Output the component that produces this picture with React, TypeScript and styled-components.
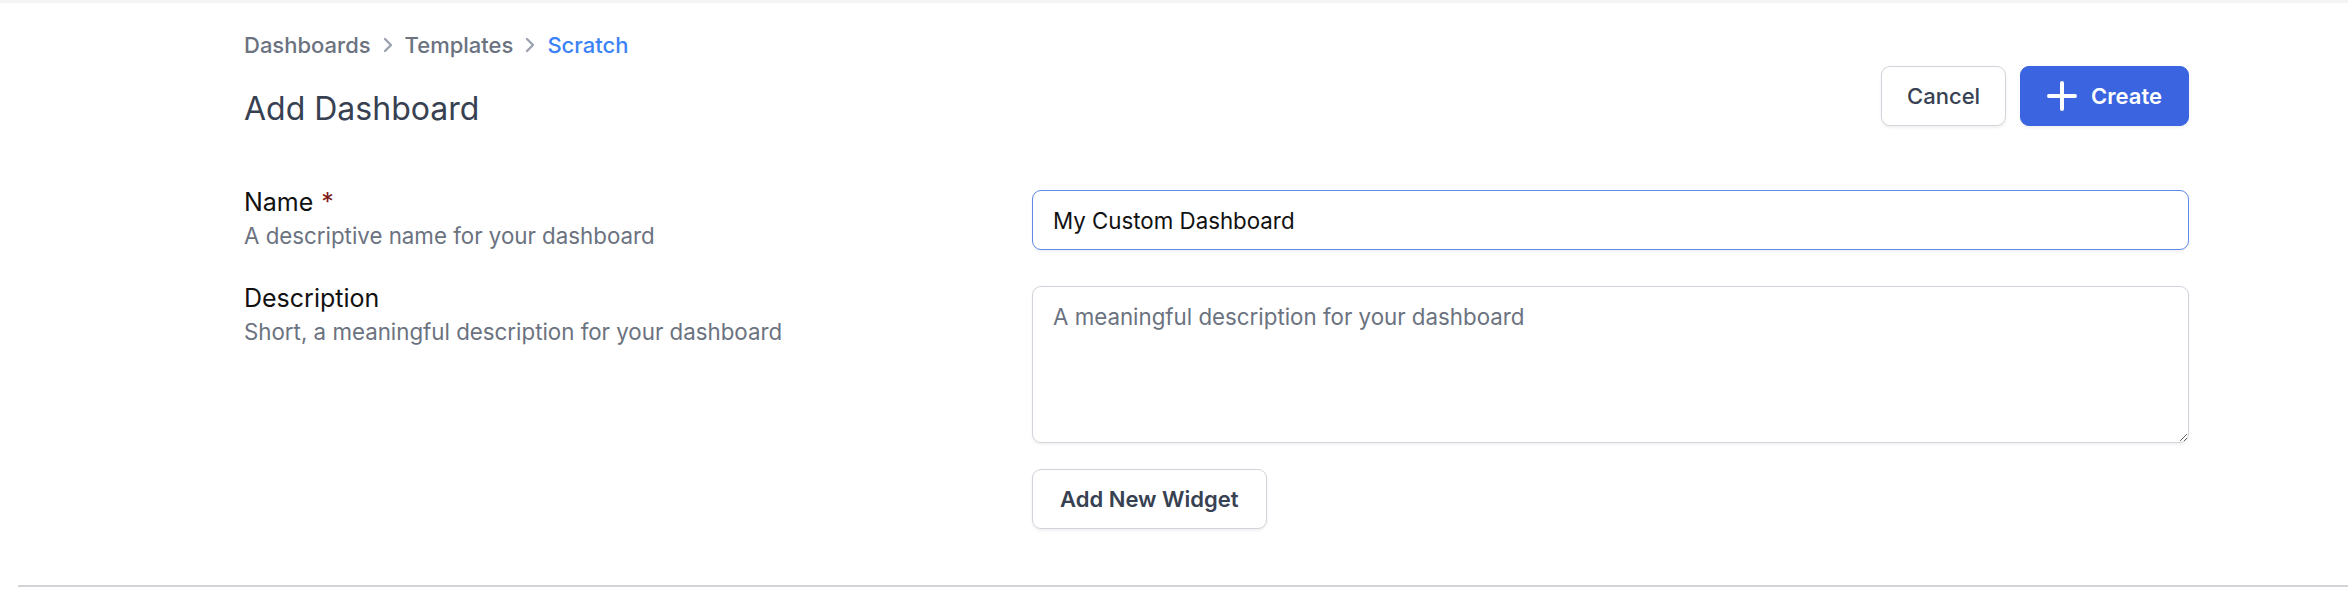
import React from "react";
import styled, { createGlobalStyle } from "styled-components";

const GlobalStyle = createGlobalStyle`
  html, body { margin: 0; padding: 0; background: #ffffff; }
  body { font-family: Inter, "Noto Sans", "Liberation Sans", sans-serif; color: #111827; }
  * { box-sizing: border-box; }
`;

const Page = styled.div`
  width: 2348px;
  min-height: 596px;
  border-top: 3px solid #f3f4f6;
  background: #fff;
`;

const Content = styled.div`
  width: 1945px;
  margin-left: 244px;
  padding-top: 27px;
`;

const Header = styled.header`
  display: flex;
  justify-content: space-between;
  align-items: flex-start;
`;

const TitleBlock = styled.div`
  display: flex;
  flex-direction: column;
  gap: 26px;
`;

const Breadcrumb = styled.nav`
  display: flex;
  align-items: center;
  font-size: 22px;
  line-height: 30px;
  font-weight: 500;
`;

const Crumb = styled.span<{ $active?: boolean }>`
  color: ${(p) => (p.$active ? "#3b82f6" : "#6b7280")};
`;

const Sep = styled.svg`
  width: 10px;
  height: 16px;
  margin: 0 12px;
  color: #9ca3af;
`;

const Title = styled.h1`
  margin: 0;
  font-size: 32px;
  line-height: 45px;
  font-weight: 400;
  color: #374151;
`;

const Actions = styled.div`
  display: flex;
  gap: 14px;
  padding-top: 36px;
`;

const Button = styled.button<{ $primary?: boolean }>`
  display: inline-flex;
  align-items: center;
  gap: 14px;
  height: 60px;
  padding: 0 ${(p) => (p.$primary ? "26px" : "25px")};
  border-radius: 9px;
  font-family: inherit;
  font-size: 22px;
  font-weight: ${(p) => (p.$primary ? 600 : 500)};
  border: 1px solid ${(p) => (p.$primary ? "#3a64e0" : "#d1d5db")};
  background: ${(p) => (p.$primary ? "#3a64e0" : "#ffffff")};
  color: ${(p) => (p.$primary ? "#ffffff" : "#374151")};
  box-shadow: 0 1.5px 3px rgba(0, 0, 0, 0.06);
  cursor: pointer;
`;

const WidgetButton = styled(Button)`
  padding: 0 27px;
  font-weight: 600;
`;

const Form = styled.div`
  display: flex;
  flex-direction: column;
  gap: 36px;
  margin-top: 59px;
`;

const FieldRow = styled.div<{ $tight?: boolean }>`
  display: grid;
  grid-template-columns: 764px 1157px;
  column-gap: 24px;
  margin-top: ${(p) => (p.$tight ? "-10px" : "0")};
`;

const FieldInfo = styled.div`
  display: flex;
  flex-direction: column;
  gap: 8px;
`;

const Label = styled.label`
  font-size: 25px;
  line-height: 24px;
  font-weight: 400;
  color: #111111;
`;

const Req = styled.span`
  color: #7f1d1d;
  margin-left: 8px;
`;

const Hint = styled.div`
  font-size: 22.3px;
  line-height: 28px;
  color: #6b7280;
`;

const TextInput = styled.input`
  width: 100%;
  height: 60px;
  padding: 0 20px;
  border: 1px solid #5f8ae8;
  border-radius: 9px;
  font-family: inherit;
  font-size: 22.3px;
  color: #111111;
  box-shadow: 0 1.5px 3px rgba(0, 0, 0, 0.05);
  outline: none;
`;

const TextArea = styled.textarea`
  width: 100%;
  height: 157px;
  padding: 15px 20px;
  border: 1px solid #d1d5db;
  border-radius: 9px;
  font-family: inherit;
  font-size: 22.3px;
  line-height: 30px;
  color: #111111;
  box-shadow: 0 1.5px 3px rgba(0, 0, 0, 0.05);
  outline: none;
  resize: vertical;
  &::placeholder { color: #6b7280; }
`;

const WidgetCell = styled.div`
  grid-column: 2;
`;

const Divider = styled.hr`
  margin: 56px 0 0 18px;
  border: 0;
  border-top: 2px solid #d4d4d8;
`;

function Chevron() {
  return (
    <Sep viewBox="0 0 10 16" fill="none" stroke="currentColor" strokeWidth={2.4} strokeLinecap="round" strokeLinejoin="round">
      <polyline points="2,2 8,8 2,14" />
    </Sep>
  );
}

function PlusIcon() {
  return (
    <svg width="30" height="30" viewBox="0 0 30 30" fill="none" stroke="currentColor" strokeWidth={4} strokeLinecap="round">
      <line x1="15" y1="2" x2="15" y2="28" />
      <line x1="2" y1="15" x2="28" y2="15" />
    </svg>
  );
}

export default function App() {
  return (
    <>
      <GlobalStyle />
      <Page>
        <Content>
          <Header>
            <TitleBlock>
              <Breadcrumb>
                <Crumb>Dashboards</Crumb>
                <Chevron />
                <Crumb>Templates</Crumb>
                <Chevron />
                <Crumb $active>Scratch</Crumb>
              </Breadcrumb>
              <Title>Add Dashboard</Title>
            </TitleBlock>
            <Actions>
              <Button>Cancel</Button>
              <Button $primary>
                <PlusIcon />
                Create
              </Button>
            </Actions>
          </Header>
          <Form>
            <FieldRow>
              <FieldInfo>
                <Label>
                  Name<Req>*</Req>
                </Label>
                <Hint>A descriptive name for your dashboard</Hint>
              </FieldInfo>
              <TextInput defaultValue="My Custom Dashboard" />
            </FieldRow>
            <FieldRow>
              <FieldInfo>
                <Label>Description</Label>
                <Hint>Short, a meaningful description for your dashboard</Hint>
              </FieldInfo>
              <TextArea placeholder="A meaningful description for your dashboard" />
            </FieldRow>
            <FieldRow $tight>
              <WidgetCell>
                <WidgetButton>Add New Widget</WidgetButton>
              </WidgetCell>
            </FieldRow>
          </Form>
        </Content>
        <Divider />
      </Page>
    </>
  );
}
